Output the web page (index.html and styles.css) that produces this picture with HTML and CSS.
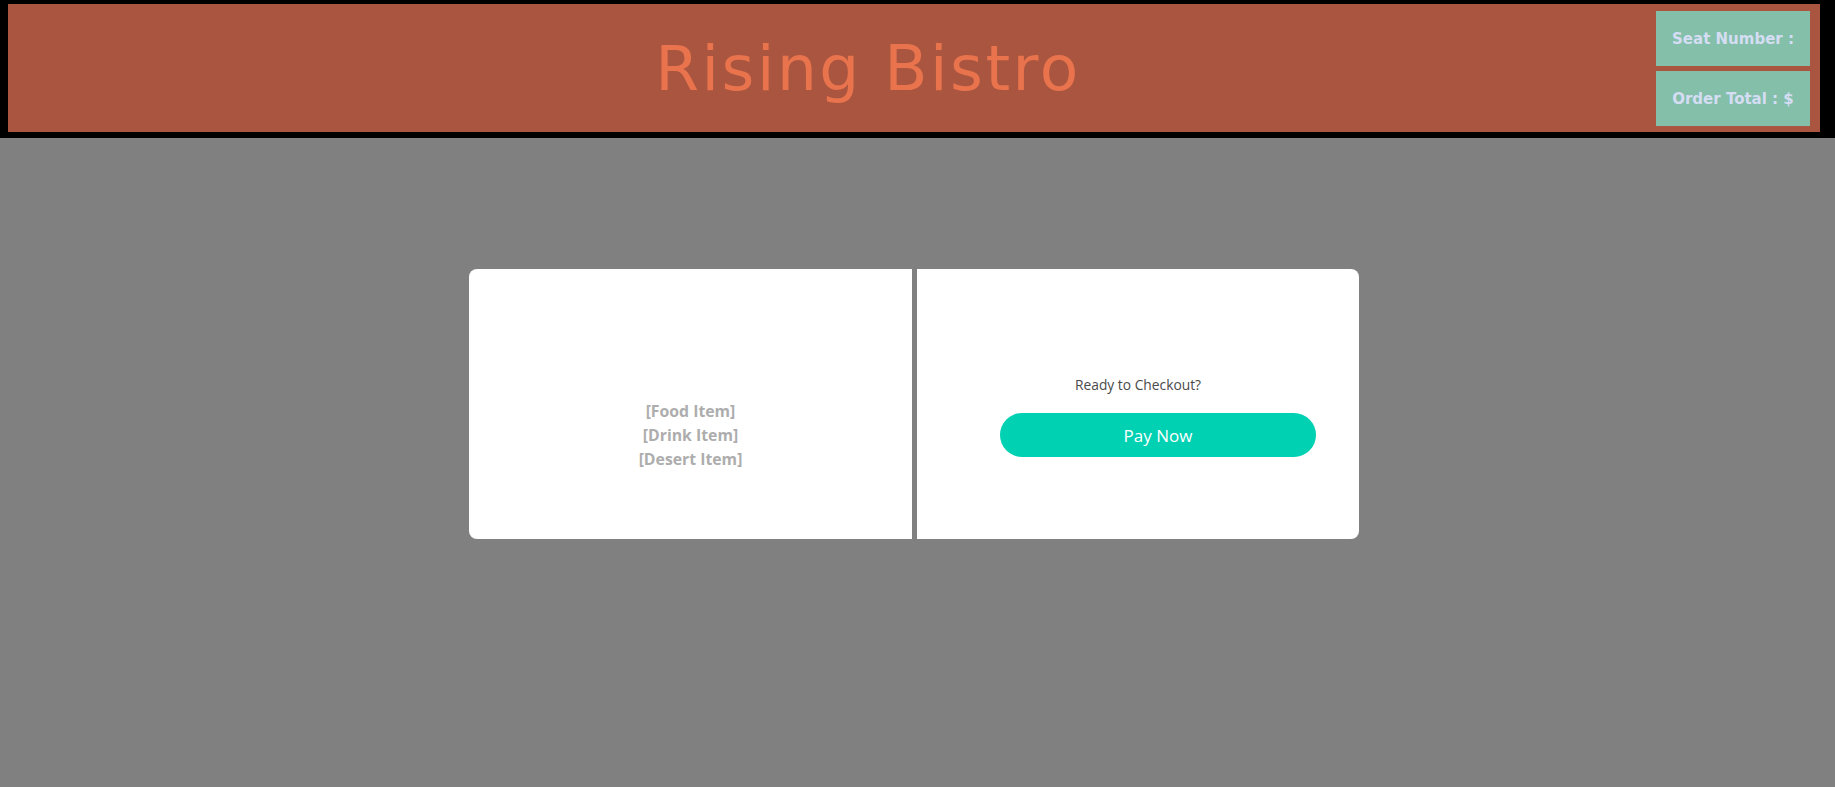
FILE: index.html
```html
<!DOCTYPE html>
<html lang="en">
<head>
<meta charset="utf-8">
<title>Rising Bistro</title>
<link rel="stylesheet" href="styles.css">
</head>
<body>
<header class="top">
  <div class="bar">
    <h1 class="title">Rising Bistro</h1>
    <div class="info">
      <div class="info-box">Seat Number :</div>
      <div class="info-box">Order Total : $</div>
    </div>
  </div>
</header>
<main class="main">
  <div class="panels">
    <section class="panel panel-left">
      <ul class="items">
        <li>[Food Item]</li>
        <li>[Drink Item]</li>
        <li>[Desert Item]</li>
      </ul>
    </section>
    <section class="panel panel-right">
      <p class="ready">Ready to Checkout?</p>
      <button class="pay" type="button">Pay Now</button>
    </section>
  </div>
</main>
</body>
</html>
```
FILE: styles.css
```css
html, body {
  margin: 0;
  height: 100%;
}

body {
  background: #808080;
  font-family: "Open Sans", "Noto Sans", sans-serif;
}

.top {
  background: #000;
  padding: 4px 15px 6px 8px;
}

.bar {
  background: #a9553f;
  height: 128px;
  display: flex;
  align-items: center;
}

.title {
  flex: 1;
  margin: 0;
  padding-left: 72px;
  text-align: center;
  font-family: "DejaVu Sans", sans-serif;
  font-weight: normal;
  font-size: 63px;
  letter-spacing: 2.5px;
  color: #e8734c;
}

.info {
  align-self: flex-start;
  display: flex;
  flex-direction: column;
  gap: 5px;
  margin: 7px 10px 0 0;
}

.info-box {
  width: 154px;
  height: 55px;
  display: flex;
  align-items: center;
  justify-content: center;
  background: #84bfaa;
  color: #d5ddf3;
  font-family: "DejaVu Sans", sans-serif;
  font-weight: bold;
  font-size: 15px;
}

.main {
  display: flex;
  justify-content: center;
  padding: 131px 15px 0 8px;
}

.panels {
  display: flex;
  gap: 5px;
}

.panel {
  background: #fff;
  height: 270px;
  display: flex;
  flex-direction: column;
  align-items: center;
  justify-content: center;
  box-sizing: border-box;
}

.panel-left {
  width: 443px;
  border-radius: 8px 0 0 8px;
  padding-top: 62px;
}

.panel-right {
  width: 442px;
  border-radius: 0 8px 8px 0;
  padding-top: 24px;
}

.items {
  list-style: none;
  margin: 0;
  padding: 0;
  text-align: center;
  color: #adadad;
  font-weight: bold;
  font-size: 15.8px;
  line-height: 24px;
}

.ready {
  margin: 0 0 18px 0;
  color: #4a4a4a;
  font-size: 13.8px;
  line-height: 20px;
}

.pay {
  width: 316px;
  height: 44px;
  margin-left: 40px;
  border: none;
  border-radius: 9999px;
  background: #00d1b2;
  color: #fff;
  font-family: "Open Sans", "Noto Sans", sans-serif;
  font-size: 17px;
  cursor: pointer;
}
```
